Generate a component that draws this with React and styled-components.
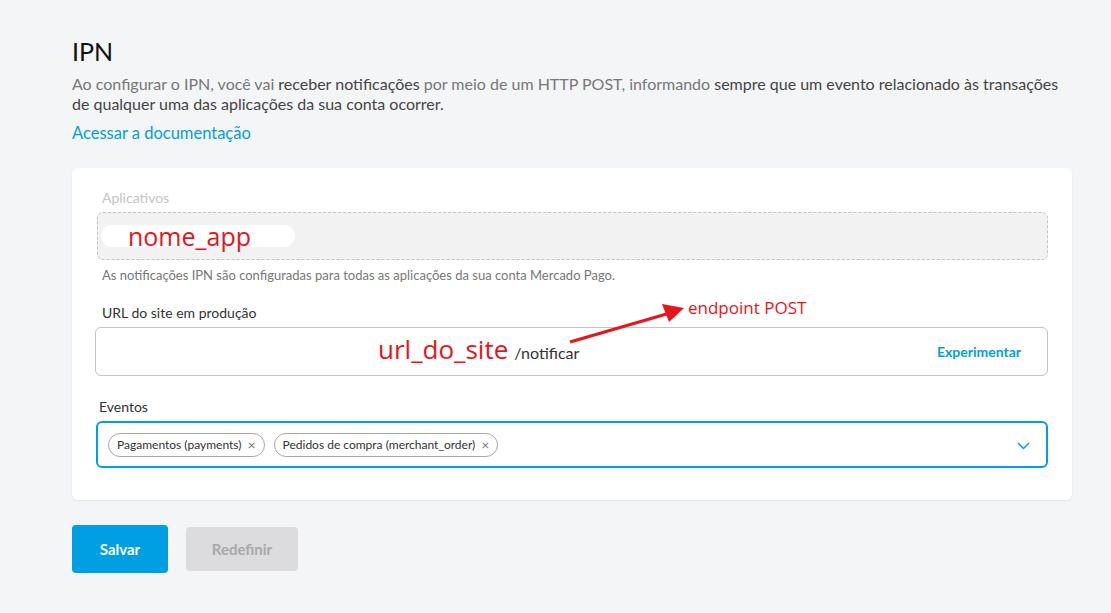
import React from 'react';
import styled, { createGlobalStyle } from 'styled-components';

const GlobalStyle = createGlobalStyle`
  body {
    margin: 0;
    background: #f4f5f7;
    font-family: Lato, "Open Sans", sans-serif;
    color: #333;
  }
`;

const events = ['Pagamentos (payments)', 'Pedidos de compra (merchant_order)'];

export default function App() {
  return (
    <Page>
      <GlobalStyle />
      <Title>IPN</Title>
      <Description>
        Ao configurar o IPN, você vai <b>receber notificações</b> por meio de um HTTP POST, informando{' '}
        <b>sempre que um evento relacionado às transações</b>
        <br />
        <b>de qualquer uma das aplicações da sua conta ocorrer.</b>
      </Description>
      <DocLink href="#">Acessar a documentação</DocLink>

      <Card>
        <Field>
          <Label disabled>Aplicativos</Label>
          <DisabledInput>
            <Mask>
              <Annotation size={25}>nome_app</Annotation>
            </Mask>
          </DisabledInput>
          <Helper>As notificações IPN são configuradas para todas as aplicações da sua conta Mercado Pago.</Helper>
        </Field>

        <Field>
          <Label>URL do site em produção</Label>
          <UrlInput>
            <UrlValue>
              <Annotation size={26}>url_do_site</Annotation>
              <Path>/notificar</Path>
            </UrlValue>
            <Action>Experimentar</Action>
            <Arrow width="130" height="50" viewBox="0 0 130 50">
              <line x1="4" y1="44" x2="104" y2="15" stroke="#e8141a" strokeWidth="3" />
              <polygon points="118,10 96,6 103,24" fill="#e8141a" />
            </Arrow>
            <ArrowLabel>endpoint POST</ArrowLabel>
          </UrlInput>
        </Field>

        <Field>
          <Label indent={4}>Eventos</Label>
          <Select>
            {events.map(e => (
              <Chip key={e}>
                {e}
                <ChipClose>×</ChipClose>
              </Chip>
            ))}
            <Chevron width="13" height="8" viewBox="0 0 13 8">
              <polyline points="1,1 6.5,6.5 12,1" fill="none" stroke="#009ee3" strokeWidth="1.5" />
            </Chevron>
          </Select>
        </Field>
      </Card>

      <Buttons>
        <Button primary>Salvar</Button>
        <Button>Redefinir</Button>
      </Buttons>
    </Page>
  );
}

const Page = styled.div`
  width: 1000px;
  padding: 36px 0 40px 72px;
`;

const Title = styled.h1`
  margin: 0;
  font-size: 25px;
  font-weight: 400;
  color: #111;
  line-height: 30px;
`;

const Description = styled.p`
  margin: 8px 0 0;
  font-size: 16px;
  line-height: 20px;
  color: #777;
  white-space: nowrap;
  b {
    font-weight: 400;
    color: #444;
  }
`;

const DocLink = styled.a`
  display: inline-block;
  margin-top: 9px;
  font-size: 16.5px;
  line-height: 20px;
  color: #009ee3;
  text-decoration: none;
`;

const Card = styled.div`
  margin-top: 25px;
  background: #fff;
  border-radius: 6px;
  box-shadow: 0 1px 2px rgba(0, 0, 0, 0.08);
  padding: 22px 24px 32px 23px;
  display: flex;
  flex-direction: column;
  gap: 23px;
`;

const Field = styled.div`
  display: flex;
  flex-direction: column;
`;

const Label = styled.label`
  font-size: 14px;
  line-height: 16px;
  margin: 0 0 6px ${p => p.indent ?? 7}px;
  color: ${p => (p.disabled ? '#c4c4c4' : '#333')};
`;

const DisabledInput = styled.div`
  height: 46px;
  margin-left: 2px;
  border: 1px dashed #c2c2c2;
  border-radius: 6px;
  background: #f2f2f2;
  display: flex;
  align-items: center;
  padding-left: 3px;
`;

const Mask = styled.div`
  width: 194px;
  height: 22px;
  background: #fff;
  border-radius: 11px;
  display: flex;
  align-items: center;
  padding-left: 27px;
  box-sizing: border-box;
`;

const Annotation = styled.span`
  font-family: "Open Sans", sans-serif;
  color: #e8141a;
  font-size: ${p => p.size}px;
  line-height: 1;
`;

const Helper = styled.div`
  margin: 8px 0 0 7px;
  font-size: 13px;
  line-height: 14px;
  color: #777;
`;

const UrlInput = styled.div`
  position: relative;
  height: 47px;
  border: 1px solid #c4c4c4;
  border-radius: 6px;
  display: flex;
  align-items: center;
  justify-content: flex-end;
  padding-right: 26px;
`;

const UrlValue = styled.div`
  position: absolute;
  left: 282px;
  top: 8px;
  display: flex;
  align-items: baseline;
  gap: 6px;
`;

const Path = styled.span`
  font-size: 16px;
  color: #333;
`;

const Action = styled.span`
  font-size: 14px;
  font-weight: 700;
  color: #009ee3;
`;

const Arrow = styled.svg`
  position: absolute;
  left: 470px;
  top: -30px;
`;

const ArrowLabel = styled.span`
  position: absolute;
  left: 592px;
  top: -32px;
  font-family: "Open Sans", sans-serif;
  font-size: 17px;
  color: #e8141a;
`;

const Select = styled.div`
  position: relative;
  height: 43px;
  margin-left: 1px;
  border: 2px solid #009ee3;
  border-radius: 6px;
  display: flex;
  align-items: center;
  gap: 9px;
  padding-left: 10px;
`;

const Chip = styled.span`
  display: inline-flex;
  align-items: center;
  gap: 6px;
  height: 22px;
  padding: 0 8px;
  border: 1px solid #a8a8a8;
  border-radius: 12px;
  font-size: 12px;
  color: #333;
`;

const ChipClose = styled.span`
  font-size: 14px;
  color: #777;
`;

const Chevron = styled.svg`
  position: absolute;
  right: 16px;
  top: 19px;
`;

const Buttons = styled.div`
  margin-top: 25px;
  display: flex;
  align-items: center;
  gap: 18px;
`;

const Button = styled.button`
  height: ${p => (p.primary ? 48 : 44)}px;
  width: ${p => (p.primary ? 96 : 112)}px;
  border: none;
  border-radius: 4px;
  background: ${p => (p.primary ? '#009ee3' : '#dcdcde')};
  color: ${p => (p.primary ? '#fff' : '#a8a8a8')};
  font-family: Lato, sans-serif;
  font-size: 15px;
  font-weight: 700;
`;
